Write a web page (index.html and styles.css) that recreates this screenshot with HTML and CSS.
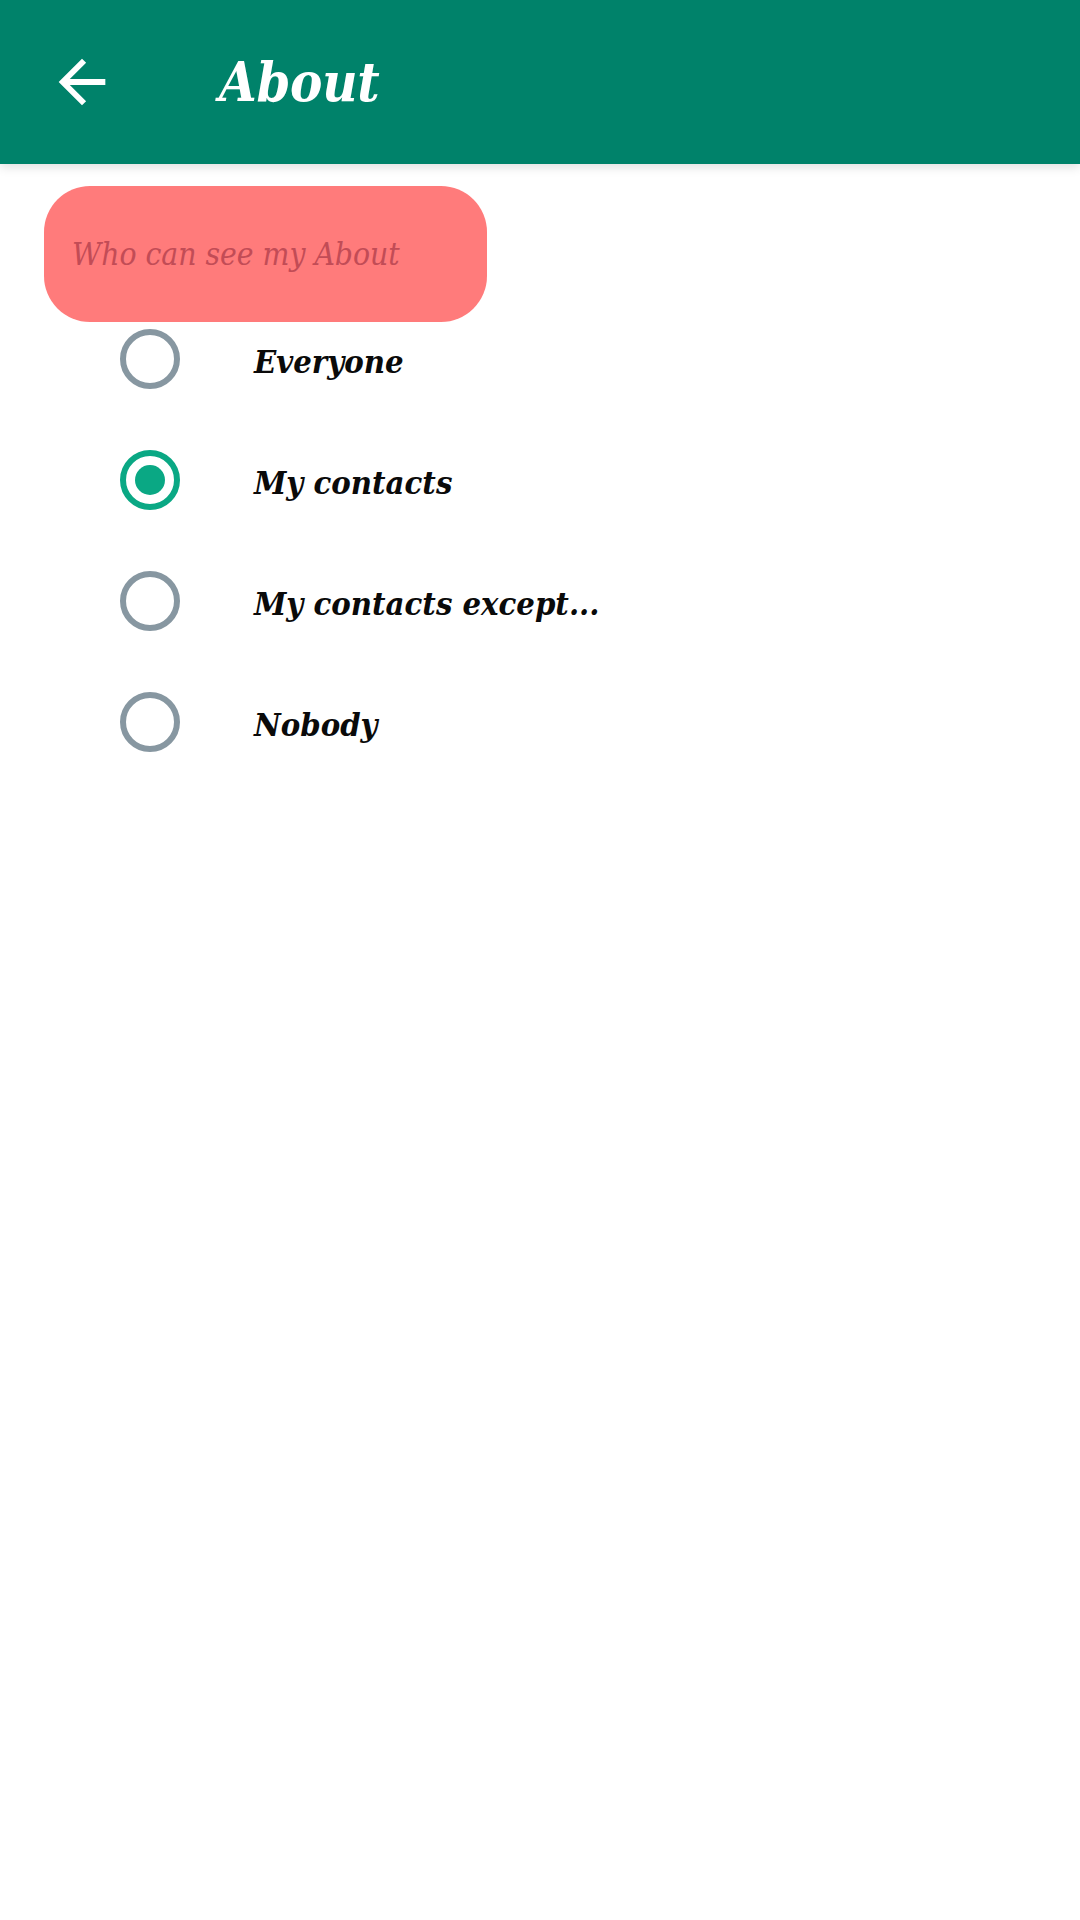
FILE: index.html
```html
<!DOCTYPE html>
<html>
<head>
<meta charset="utf-8">
<link rel="stylesheet" href="styles.css">
</head>
<body>
<header class="appbar">
  <div class="back">
    <svg viewBox="0 0 24 24" width="70" height="70"><path fill="#ffffff" d="M20 11H7.83l5.59-5.59L12 4l-8 8 8 8 1.41-1.41L7.83 13H20v-2z"/></svg>
  </div>
  <h1 class="title">About</h1>
</header>
<main class="content">
  <div class="pill"><span class="pill-text">Who can see my About</span></div>
  <ul class="options">
    <li class="option"><span class="radio"></span><span class="label">Everyone</span></li>
    <li class="option"><span class="radio checked"></span><span class="label">My contacts</span></li>
    <li class="option"><span class="radio"></span><span class="label">My contacts except...</span></li>
    <li class="option"><span class="radio"></span><span class="label">Nobody</span></li>
  </ul>
</main>
</body>
</html>
```
FILE: styles.css
```css
html, body {
  margin: 0;
  padding: 0;
  background: #ffffff;
}
body {
  width: 1080px;
  height: 1920px;
  font-family: "DejaVu Serif Condensed", "DejaVu Serif", "Liberation Serif", serif;
  font-stretch: condensed;
  overflow: hidden;
}
.appbar {
  height: 164px;
  background: #00826a;
  display: flex;
  align-items: center;
  box-shadow: 0 3px 10px rgba(0, 0, 0, 0.13);
  position: relative;
  z-index: 1;
}
.back {
  margin-left: 47px;
  width: 70px;
  height: 70px;
  display: flex;
}
.title {
  margin: 0 0 0 102px;
  color: #ffffff;
  font-style: italic;
  font-weight: bold;
  font-size: 54px;
  letter-spacing: -0.3px;
  line-height: 1;
}
.content {
  padding-top: 22px;
}
.pill {
  margin-left: 44px;
  width: 443px;
  height: 136px;
  border-radius: 46px;
  background: #ff7b7b;
  display: flex;
  align-items: center;
  padding-left: 28px;
  box-sizing: border-box;
}
.pill-text {
  font-style: italic;
  font-size: 31.5px;
  color: #c24c56;
}
.options {
  list-style: none;
  margin: 0;
  padding: 0;
}
.option {
  height: 121px;
  display: flex;
  align-items: flex-start;
  padding-top: 7px;
  box-sizing: border-box;
}
.radio {
  margin-left: 120px;
  width: 60px;
  height: 60px;
  flex: none;
  box-sizing: border-box;
  border: 6px solid #8797a1;
  border-radius: 50%;
  display: flex;
  align-items: center;
  justify-content: center;
}
.radio.checked {
  border-color: #0aa884;
}
.radio.checked::after {
  content: "";
  width: 30px;
  height: 30px;
  border-radius: 50%;
  background: #0aa884;
}
.label {
  margin-left: 74px;
  padding-top: 3px;
  font-style: italic;
  font-weight: bold;
  font-size: 32.5px;
  line-height: 60px;
  color: #0a0a0a;
}
```
